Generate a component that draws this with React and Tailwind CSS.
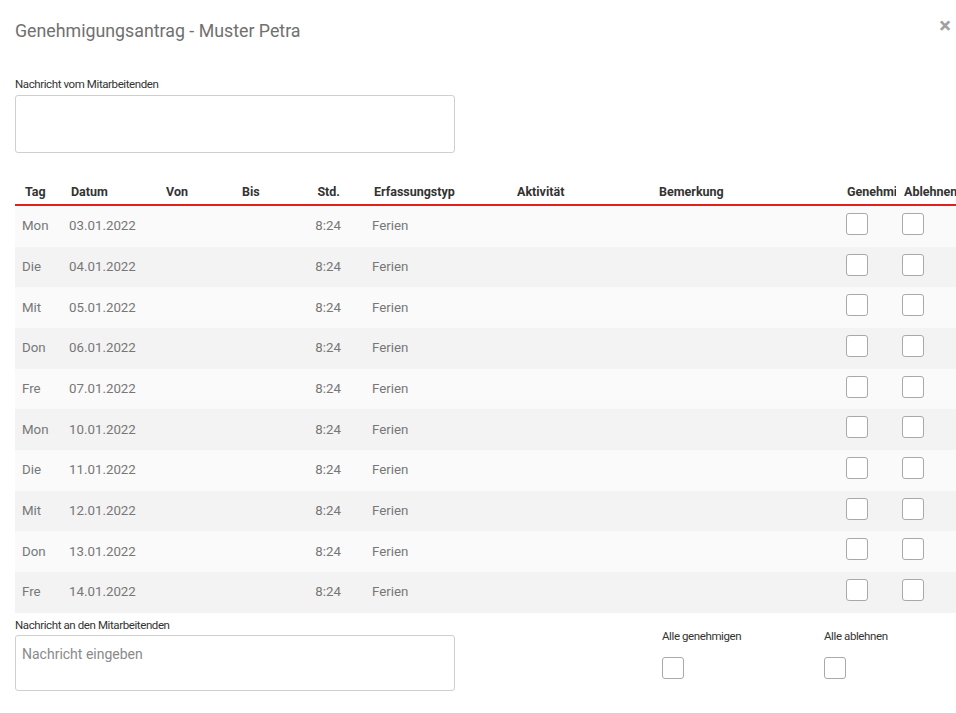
import React from "react";

const rows = [
  ["Mon", "03.01.2022"],
  ["Die", "04.01.2022"],
  ["Mit", "05.01.2022"],
  ["Don", "06.01.2022"],
  ["Fre", "07.01.2022"],
  ["Mon", "10.01.2022"],
  ["Die", "11.01.2022"],
  ["Mit", "12.01.2022"],
  ["Don", "13.01.2022"],
  ["Fre", "14.01.2022"],
];

function Box() {
  return <div className="w-[22px] h-[22px] border border-[#a9a9a9] rounded-[3px] bg-white" />;
}

export default function App() {
  return (
    <div
      className="w-[956px] h-[713px] overflow-hidden bg-white relative"
      style={{ fontFamily: "Roboto, 'Liberation Sans', sans-serif" }}
    >
      <div className="absolute right-[5px] top-[15px] text-[22px] font-bold text-[#a0a0a0] leading-none">×</div>
      <div className="pl-[15px] pt-[19px]">
        <h1 className="text-[17.8px] leading-[24px] text-[#707070] font-normal">Genehmigungsantrag - Muster Petra</h1>
        <div className="mt-[34px] text-[11.5px] leading-[14px] tracking-[-0.4px] text-[#333]">Nachricht vom Mitarbeitenden</div>
        <div className="mt-[4px] w-[440px] h-[58px] border border-[#cfcfcf] rounded-[3px]" />
        <div className="mt-[24px] w-[960px]">
          <div className="flex h-[24px] items-center pt-[3px] text-[12.5px] font-bold text-[#333] border-b-2 border-[#e2211c] box-content">
            <div className="w-[47px] pl-[10px]">Tag</div>
            <div className="w-[95px] pl-[9px]">Datum</div>
            <div className="w-[76px] pl-[9px]">Von</div>
            <div className="w-[76px] pl-[9px]">Bis</div>
            <div className="w-[56px] pr-[25px] text-right">Std.</div>
            <div className="w-[143px] pl-[9px]">Erfassungstyp</div>
            <div className="w-[142px] pl-[9px]">Aktivität</div>
            <div className="w-[189px] pl-[9px]">Bemerkung</div>
            <div className="w-[57px] pl-[8px] overflow-hidden whitespace-nowrap">Genehmigen</div>
            <div className="w-[79px] pl-[8px] overflow-hidden whitespace-nowrap">Ablehnen</div>
          </div>
          {rows.map(([d, date], i) => (
            <div
              key={i}
              className={`flex h-[40.67px] items-center text-[13.3px] text-[#777] ${i % 2 === 0 ? "bg-[#fafafa]" : "bg-[#f3f3f3]"}`}
            >
              <div className="w-[47px] pl-[7px]">{d}</div>
              <div className="w-[95px] pl-[7px]">{date}</div>
              <div className="w-[76px] pl-[7px]"></div>
              <div className="w-[76px] pl-[7px]"></div>
              <div className="w-[56px] pr-[24px] text-right">8:24</div>
              <div className="w-[143px] pl-[7px]">Ferien</div>
              <div className="w-[142px] pl-[7px]"></div>
              <div className="w-[189px] pl-[7px]"></div>
              <div className="w-[56px] pl-[7px] self-start pt-[7px]"><Box /></div>
              <div className="w-[80px] pl-[7px] self-start pt-[7px]"><Box /></div>
            </div>
          ))}
        </div>
        <div className="flex mt-[5px]">
          <div className="w-[647px]">
            <div className="text-[11.5px] leading-[14px] tracking-[-0.4px] text-[#333]">Nachricht an den Mitarbeitenden</div>
            <div className="mt-[3px] w-[440px] h-[56px] border border-[#cfcfcf] rounded-[3px] px-[6px] pt-[9px] text-[14px] text-[#8a8a8a] leading-[18px]">
              Nachricht eingeben
            </div>
          </div>
          <div className="w-[162px] mt-[11px]">
            <div className="text-[11.5px] leading-[14px] tracking-[-0.4px] text-[#333]">Alle genehmigen</div>
            <div className="mt-[14px]"><Box /></div>
          </div>
          <div className="mt-[11px]">
            <div className="text-[11.5px] leading-[14px] tracking-[-0.4px] text-[#333]">Alle ablehnen</div>
            <div className="mt-[14px]"><Box /></div>
          </div>
        </div>
      </div>
    </div>
  );
}
